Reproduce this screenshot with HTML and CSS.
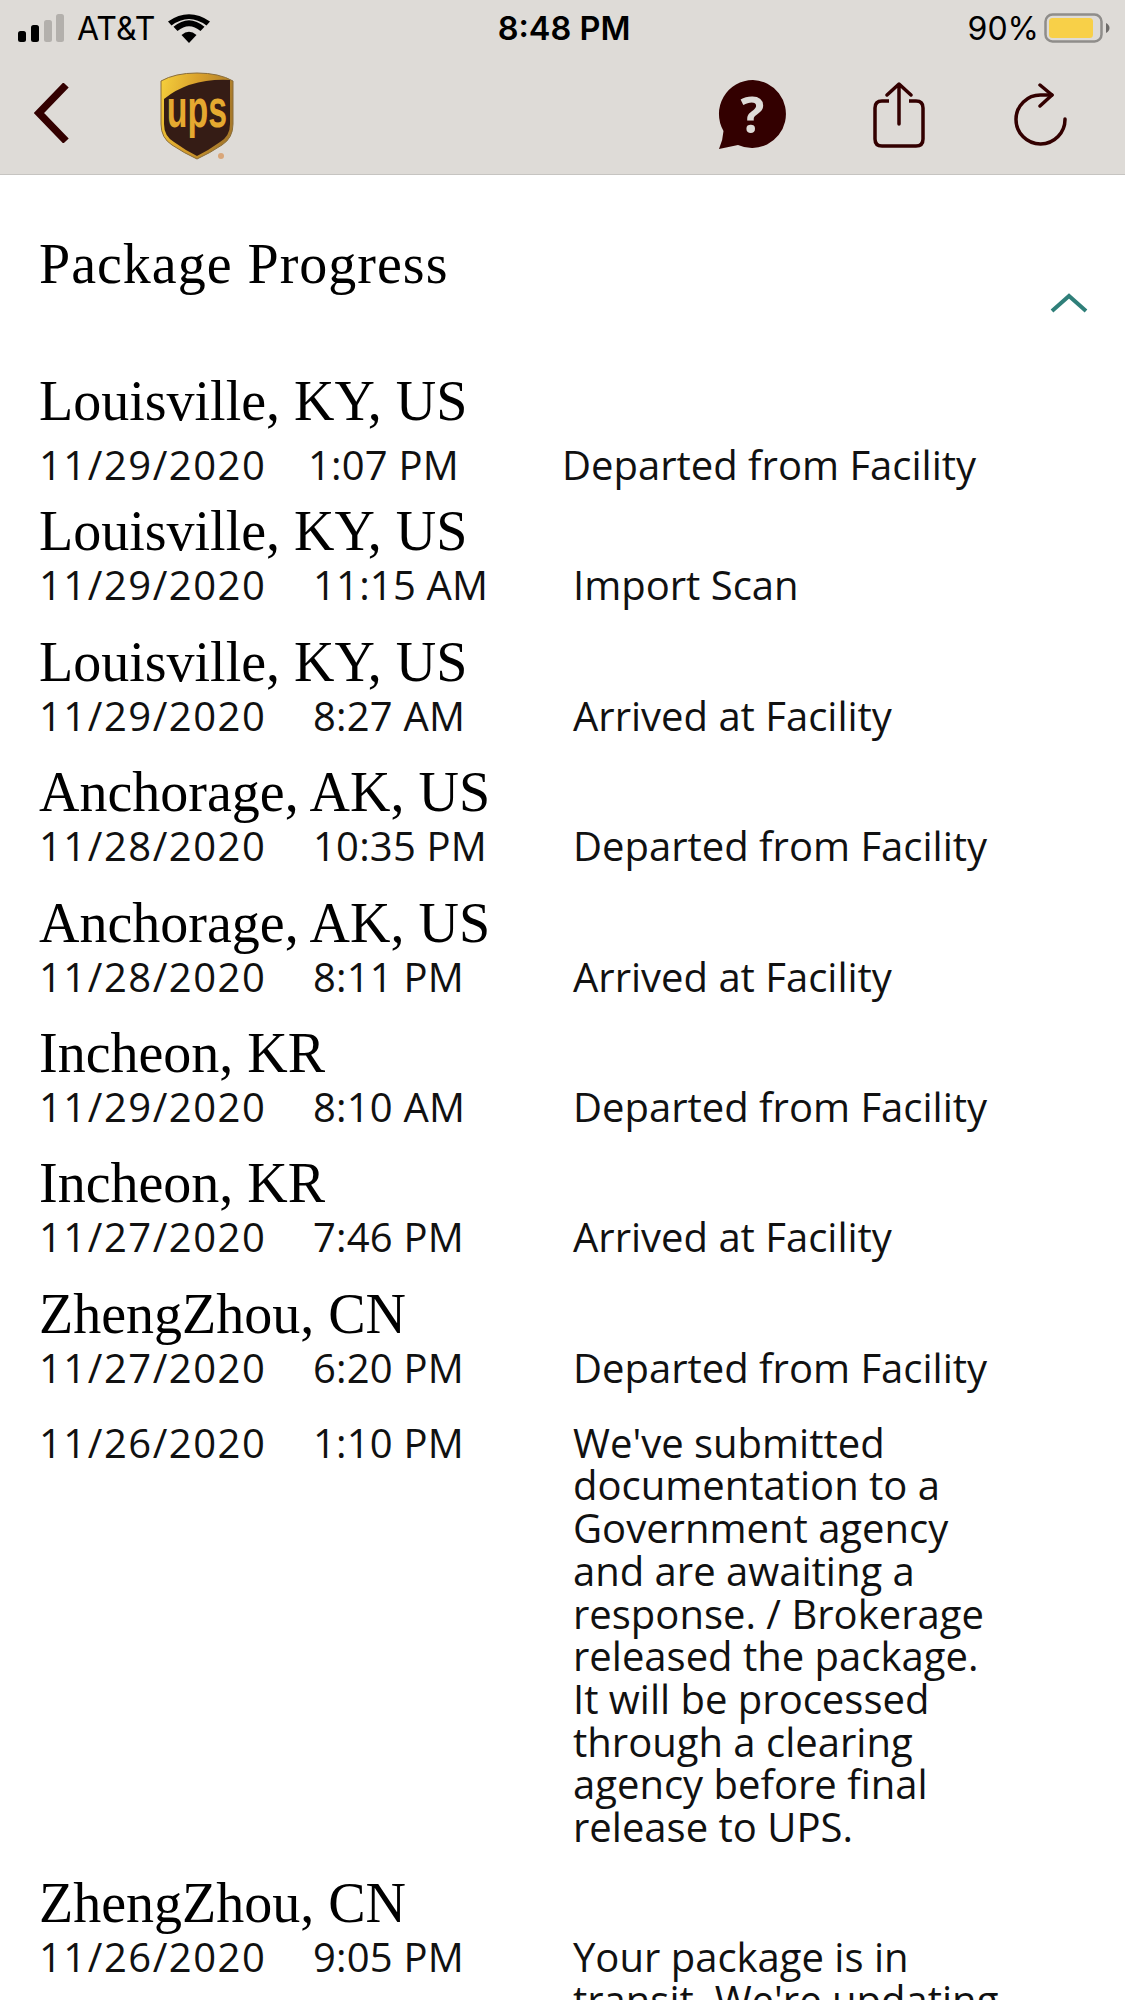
FILE: index.html

```html
<!DOCTYPE html>
<html lang="en">
<head>
    <meta charset="UTF-8">
    <meta name="viewport" content="width=device-width, initial-scale=1.0">
    <title>Package Progress</title>
    <link rel="stylesheet" href="styles.css">
</head>
<body>
    <header class="topbar">
        <div class="status">
            <div class="status-left">
                <svg class="signal" width="46" height="28" viewBox="0 0 46 28">
                    <rect x="0" y="17" width="8" height="11" rx="2.5" fill="#000"/>
                    <rect x="13" y="11" width="8" height="17" rx="2.5" fill="#000"/>
                    <rect x="26" y="6" width="8" height="22" rx="2.5" fill="#b3b0ac"/>
                    <rect x="38" y="0" width="8" height="28" rx="2.5" fill="#b3b0ac"/>
                </svg>
                <span class="carrier">AT&amp;T</span>
                <svg class="wifi" width="42" height="30" viewBox="0 0 42 30">
                    <path d="M21 30 L13.500 22 Q21 15.500 28.500 22 Z" fill="#000"/>
                    <path d="M9.500 18 L5.500 13.800 Q21 0.500 36.500 13.800 L32.500 18 Q21 8.500 9.500 18 Z" fill="#000"/>
                    <path d="M3.500 12.500 L0 8.500 Q21 -6 42 8.500 L38.500 12.500 Q21 -0.500 3.500 12.500 Z" fill="#000"/>
                </svg>
            </div>
            <div class="clock">8:48 PM</div>
            <div class="status-right">
                <span class="percent">90%</span>
                <svg width="66" height="30" viewBox="0 0 66 30">
                    <rect x="1.500" y="1.500" width="56" height="27" rx="7" fill="none" stroke="#8f8d8a" stroke-width="2.500"/>
                    <rect x="5" y="5" width="44" height="20" rx="3.500" fill="#f8d048"/>
                    <path d="M62 10 Q65.500 12 65.500 15 Q65.500 18 62 20 Z" fill="#6e6c6a"/>
                </svg>
            </div>
        </div>
        <nav class="navbar">
            <div class="nav-left">
                <svg class="back" width="36" height="60" viewBox="0 0 36 60">
                    <path d="M32 2 L5 30 L32 58" fill="none" stroke="#330000" stroke-width="7.500"/>
                </svg>
                <svg class="logo" width="76" height="90" viewBox="0 0 76 90">
                    <defs>
                        <linearGradient id="band" x1="0" y1="0" x2="1" y2="0.3">
                            <stop offset="0" stop-color="#f6d13c"/>
                            <stop offset="0.5" stop-color="#d9a02c"/>
                            <stop offset="1" stop-color="#a87a2a"/>
                        </linearGradient>
                    </defs>
                    <path d="M37 1 Q15 1 1 9 V52 Q1 66 12 73 Q24 81 37 87 Q50 81 62 73 Q73 66 73 52 V9 Q59 1 37 1 Z" fill="url(#band)" stroke="#8a6d3a" stroke-width="1"/>
                    <path d="M70 8 V52 Q70 64 60 70 Q49 78 37 84 Q25 78 14 70 Q4 64 4 52 V27 Q30 6 70 8 Z" fill="#351c15"/>
                    <text class="logo-text" transform="translate(37 55) scale(0.64 1)" text-anchor="middle">ups</text>
                    <circle cx="61" cy="84" r="3" fill="#d9a679"/>
                </svg>
            </div>
            <div class="nav-right">
                <svg class="help" width="70" height="70" viewBox="0 0 70 70">
                    <path d="M35 0 A34 34 0 1 1 20 65 L1 69 Q5 60 5.500 51 A34 34 0 0 1 35 0 Z" fill="#330000"/>
                    <text class="help-mark" x="34.500" y="53" text-anchor="middle">?</text>
                </svg>
                <svg width="52" height="66" viewBox="0 0 52 66">
                    <path d="M16 19 H9 Q2 19 2 26 V57 Q2 64 9 64 H43 Q50 64 50 57 V26 Q50 19 43 19 H36" fill="none" stroke="#330000" stroke-width="3.500"/>
                    <path d="M26 42 V3 M14 13 L26 2 L38 13" fill="none" stroke="#330000" stroke-width="3.500" stroke-linecap="round" stroke-linejoin="round"/>
                </svg>
                <svg width="54" height="64" viewBox="0 0 54 64">
                    <path d="M51 36 A24.500 24.500 0 1 1 27 12 H38" fill="none" stroke="#330000" stroke-width="3.500" stroke-linecap="round"/>
                    <path d="M26 2 L38 12 L26 23" fill="none" stroke="#330000" stroke-width="3.500" stroke-linecap="round" stroke-linejoin="round"/>
                </svg>
            </div>
        </nav>
    </header>

    <main class="progress">
        <div class="progress-head">
            <h1>Package Progress</h1>
            <svg class="collapse" width="38" height="20" viewBox="0 0 38 20">
                <path d="M2 18 L19 3 L36 18" fill="none" stroke="#2f7f79" stroke-width="4"/>
            </svg>
        </div>

        <section class="entry first">
            <h2>Louisville, KY, US</h2>
            <div class="line"><span class="date">11/29/2020</span><span class="time">1:07 PM</span><span class="desc">Departed from Facility</span></div>
        </section>
        <section class="entry">
            <h2>Louisville, KY, US</h2>
            <div class="line"><span class="date">11/29/2020</span><span class="time">11:15 AM</span><span class="desc">Import Scan</span></div>
        </section>
        <section class="entry">
            <h2>Louisville, KY, US</h2>
            <div class="line"><span class="date">11/29/2020</span><span class="time">8:27 AM</span><span class="desc">Arrived at Facility</span></div>
        </section>
        <section class="entry">
            <h2>Anchorage, AK, US</h2>
            <div class="line"><span class="date">11/28/2020</span><span class="time">10:35 PM</span><span class="desc">Departed from Facility</span></div>
        </section>
        <section class="entry">
            <h2>Anchorage, AK, US</h2>
            <div class="line"><span class="date">11/28/2020</span><span class="time">8:11 PM</span><span class="desc">Arrived at Facility</span></div>
        </section>
        <section class="entry">
            <h2>Incheon, KR</h2>
            <div class="line"><span class="date">11/29/2020</span><span class="time">8:10 AM</span><span class="desc">Departed from Facility</span></div>
        </section>
        <section class="entry">
            <h2>Incheon, KR</h2>
            <div class="line"><span class="date">11/27/2020</span><span class="time">7:46 PM</span><span class="desc">Arrived at Facility</span></div>
        </section>
        <section class="entry">
            <h2>ZhengZhou, CN</h2>
            <div class="line"><span class="date">11/27/2020</span><span class="time">6:20 PM</span><span class="desc">Departed from Facility</span></div>
        </section>
        <section class="entry long">
            <div class="line"><span class="date">11/26/2020</span><span class="time">1:10 PM</span><span class="desc">We've submitted documentation to a Government agency and are awaiting a response. / Brokerage released the package. It will be processed through a clearing agency before final release to UPS.</span></div>
        </section>
        <section class="entry">
            <h2>ZhengZhou, CN</h2>
            <div class="line"><span class="date">11/26/2020</span><span class="time">9:05 PM</span><span class="desc">Your package is in transit. We're updating</span></div>
        </section>
    </main>
</body>
</html>
```

FILE: styles.css

```css
html, body {
    margin: 0;
    padding: 0;
    overflow: hidden;
}
html {
    height: 2000px;
}
body {
    width: 1125px;
    height: 2000px;
    background: #fff;
    color: #000;
    font-family: "Open Sans", sans-serif;
}
.topbar {
    height: 174px;
    background: #dedbd7;
    border-bottom: 1px solid #c6c4c1;
}
.status {
    display: grid;
    grid-template-columns: 1fr auto 1fr;
    align-items: center;
    height: 56px;
    padding: 0 15px 0 18px;
    font-family: Inter, sans-serif;
    font-size: 32px;
}
.status-left {
    display: flex;
    align-items: center;
    gap: 13px;
}
.clock {
    font-weight: 600;
    font-size: 32.5px;
}
.status-right {
    display: flex;
    justify-content: flex-end;
    align-items: center;
    gap: 5px;
}
.navbar {
    display: flex;
    justify-content: space-between;
    align-items: center;
    height: 118px;
    padding: 0 57px 0 34px;
}
.nav-left {
    display: flex;
    align-items: center;
    gap: 90px;
}
.back {
    margin-top: -4px;
}
.logo {
    margin-top: 4px;
}
.nav-right {
    display: flex;
    align-items: center;
    gap: 89px;
}
.help {
    margin-right: -4px;
}
.logo-text {
    font-family: "Liberation Sans", sans-serif;
    font-weight: 700;
    font-size: 53px;
    fill: #e5a930;
}
.help-mark {
    font-family: "Open Sans", sans-serif;
    font-weight: 700;
    font-size: 50px;
    fill: #dedbd7;
}
.progress {
    padding: 0 39px;
}
.progress-head {
    display: flex;
    justify-content: space-between;
    height: 195px;
    margin-right: -2px;
}
.progress-head h1 {
    margin: 58px 0 0;
    font-family: "Liberation Serif", serif;
    font-weight: 400;
    font-size: 56px;
    line-height: 62px;
    letter-spacing: 1px;
}
.collapse {
    margin-top: 118px;
}
.entry {
    margin-bottom: 21.4px;
}
.entry h2 {
    margin: 0;
    padding-top: 3px;
    font-family: "Liberation Serif", serif;
    font-weight: 400;
    font-size: 56px;
    line-height: 63px;
}
.line {
    display: grid;
    grid-template-columns: 274px 260px 430px;
    font-size: 40px;
    line-height: 43px;
    color: #111;
}
.date {
    letter-spacing: 1.5px;
}
.time {
    letter-spacing: 0.2px;
}
.first {
    margin-bottom: 11.4px;
}
.first h2 {
    margin-bottom: 4px;
    padding-top: 0;
}
.first .line {
    grid-template-columns: 269px 254px 430px;
    margin-top: 10px;
}
.long {
    margin-top: 33px;
    margin-bottom: 20px;
}
.long .line {
    line-height: 42.7px;
}
```
